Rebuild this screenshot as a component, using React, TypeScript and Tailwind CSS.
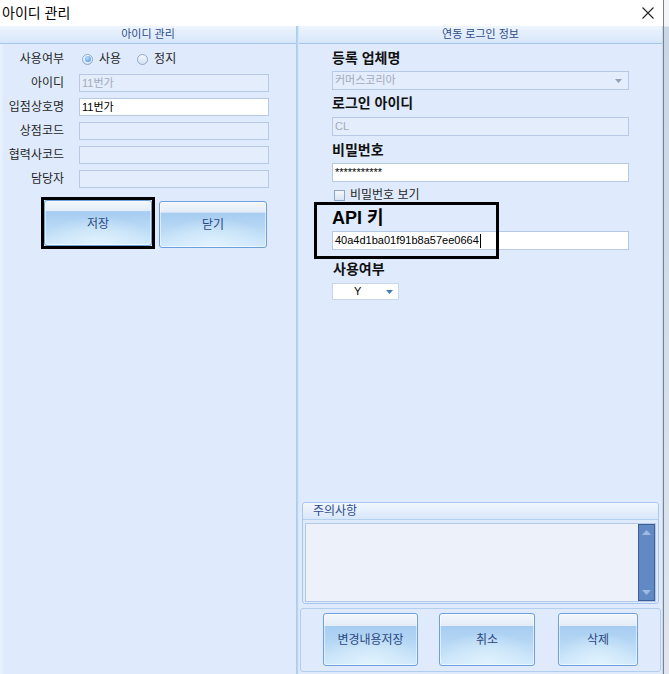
import React from 'react';

const glass =
  "rounded-[3px] border border-[#6d9fdc] bg-[radial-gradient(ellipse_55%_65%_at_50%_100%,#e0f2fd_0%,rgba(224,242,253,0)_100%),linear-gradient(to_bottom,#f3f7fb_0%,#e3ecf7_23%,#a5ccf1_24%,#b9d9f5_60%,#cfe8fb_100%)] shadow-[inset_0_0_0_1px_rgba(255,255,255,0.55)] text-[12px] text-[#2b4883] flex items-center justify-center";

const headerBar =
  "h-[18px] shrink-0 border-b border-[#a7c5eb] bg-[linear-gradient(to_bottom,#eef5fe,#d6e6fa)] flex items-center justify-center text-[11px] text-[#2d4a88]";

function FieldRow({ label, children }: { label: string; children: React.ReactNode }) {
  return (
    <div className="flex h-[18px] items-center">
      <div className="w-[64px] text-right text-[12px] text-[#1f1f1f] whitespace-nowrap">{label}</div>
      <div className="ml-[15px] flex items-center">{children}</div>
    </div>
  );
}

function Radio({ checked }: { checked?: boolean }) {
  return (
    <span className="flex h-[11px] w-[11px] items-center justify-center rounded-full border border-[#8ea8cc] bg-[linear-gradient(to_bottom,#f4f8fd,#d5e2f2)]">
      {checked && <span className="h-[6px] w-[6px] rounded-full bg-[radial-gradient(circle_at_40%_35%,#b9dcfb,#3d8be0)]" />}
    </span>
  );
}

function Arrow({ color }: { color: string }) {
  return (
    <svg width="7" height="4" viewBox="0 0 7 4">
      <path d="M0 0 H7 L3.5 4 Z" fill={color} />
    </svg>
  );
}

function Label({ text, className }: { text: string; className: string }) {
  return <div className={`h-[20px] text-[14px] font-bold leading-[20px] text-[#111] ${className}`}>{text}</div>;
}

export default function App() {
  return (
    <div className="flex h-[674px] w-[669px] overflow-hidden bg-[#e6ebf2] font-['Liberation_Sans','Noto_Sans_CJK_KR',sans-serif]">
      <div className="flex w-[663px] flex-col">
        {/* title bar */}
        <div className="flex h-[26px] shrink-0 items-center justify-between bg-white pl-[2px] pr-[9px]">
          <span className="text-[14px] text-black">아이디 관리</span>
          <svg width="12" height="12" viewBox="0 0 12 12" className="mb-[1px]">
            <path d="M0.5 0.5 L11.5 11.5 M11.5 0.5 L0.5 11.5" stroke="#222" strokeWidth="1.1" />
          </svg>
        </div>

        <div className="flex flex-1 bg-[#dfebfc]">
          {/* left panel */}
          <div className="flex w-[296px] flex-col bg-[linear-gradient(to_right,#eaf2fe,#dfebfc_4px)]">
            <div className={headerBar}>아이디 관리</div>
            <div className="flex flex-col gap-[6px] pt-[6px]">
              <FieldRow label="사용여부">
                <div className="ml-[3px] flex items-center text-[12px] text-[#1f1f1f]">
                  <Radio checked />
                  <span className="ml-[6px]">사용</span>
                  <span className="ml-[16px]"><Radio /></span>
                  <span className="ml-[6px]">정지</span>
                </div>
              </FieldRow>
              <FieldRow label="아이디">
                <div className="flex h-[18px] w-[190px] items-center border border-[#b6cae6] bg-[#e3edfb] pl-[2px] text-[11px] text-[#a3abbb]">11번가</div>
              </FieldRow>
              <FieldRow label="입점상호명">
                <div className="flex h-[18px] w-[190px] items-center border border-[#b6cae6] bg-white pl-[2px] text-[11px] text-black">11번가</div>
              </FieldRow>
              <FieldRow label="상점코드">
                <div className="h-[18px] w-[190px] border border-[#b6cae6] bg-[#e3edfb]" />
              </FieldRow>
              <FieldRow label="협력사코드">
                <div className="h-[18px] w-[190px] border border-[#b6cae6] bg-[#e3edfb]" />
              </FieldRow>
              <FieldRow label="담당자">
                <div className="h-[18px] w-[190px] border border-[#b6cae6] bg-[#e3edfb]" />
              </FieldRow>
            </div>
            <div className="ml-[41px] mt-[9px] flex items-start">
              <div className="border-[3px] border-black">
                <button className={`h-[46px] w-[108px] pt-[2px] ${glass}`}>저장</button>
              </div>
              <button className={`ml-[4px] mt-[4px] h-[47px] w-[108px] ${glass}`}>닫기</button>
            </div>
          </div>

          {/* divider */}
          <div className="w-[3px] bg-[linear-gradient(to_right,#a9c7ee,#b9d3f2,#e6effc)]" />

          {/* right panel */}
          <div className="relative flex flex-1 flex-col border-r border-[#c4d8f2] pb-[2px]">
            <div className={headerBar}>연동 로그인 정보</div>
            <div className="flex flex-col pl-[33px]">
              <Label text="등록 업체명" className="mt-[4px]" />
              <div className="mt-[3px] flex h-[19px] w-[297px] items-center justify-between border border-[#b6cae6] bg-[#e3edfb] pl-[2px] pr-[6px] text-[11px] text-[#a3abbb]">
                <span>커머스코리아</span>
                <Arrow color="#8fa1b8" />
              </div>
              <Label text="로그인 아이디" className="mt-[3px]" />
              <div className="mt-[4px] flex h-[19px] w-[297px] items-center border border-[#b6cae6] bg-[#e3edfb] pl-[2px] text-[11px] text-[#a3abbb]">CL</div>
              <Label text="비밀번호" className="mt-[4px]" />
              <div className="mt-[3px] flex h-[19px] w-[297px] items-center border border-[#b6cae6] bg-white pl-[2px] text-[11px] text-black">***********</div>
              <div className="mt-[7px] flex h-[12px] items-center pl-[2px] text-[12px] text-[#1f1f1f]">
                <span className="h-[11px] w-[11px] border border-[#8ca6c8] bg-[linear-gradient(to_bottom,#f5f8fc,#d9e4f2)]" />
                <span className="ml-[5px]">비밀번호 보기</span>
              </div>
              <div className="mt-[7px] h-[20px] text-[18px] font-bold leading-[20px] text-black">API 키</div>
              <div className="mt-[3px] flex h-[19px] w-[297px] items-center border border-[#b6cae6] bg-white pl-[2px] text-[11px] text-black">
                <span>40a4d1ba01f91b8a57ee0664</span>
                <span className="ml-[1px] h-[14px] w-px bg-black" />
              </div>
              <Label text="사용여부" className="mt-[9px] pl-[1px]" />
              <div className="mt-[4px] flex h-[17px] w-[67px] items-center border border-[#c7d6ea] bg-white text-[11px] text-black">
                <span className="ml-[21px]">Y</span>
                <span className="ml-auto mr-[5px]"><Arrow color="#4a78c0" /></span>
              </div>
            </div>

            {/* highlight frame around API key */}
            <div className="absolute left-[15px] top-[176px] h-[57px] w-[185px] border-[3px] border-black" />

            {/* notes */}
            <div className="mx-[3px] mt-auto flex h-[102px] flex-col rounded-[3px] border border-[#a9c7ec]">
              <div className="flex h-[17px] items-center rounded-t-[3px] border-b border-[#b5cfef] bg-[linear-gradient(to_bottom,#f1f7fe,#d8e7fa)] pl-[10px] text-[12px] text-[#2d4a88]">주의사항</div>
              <div className="mx-[2px] mt-[3px] flex h-[79px] border border-[#b4c9e6] bg-[#ecf1fa]">
                <div className="flex-1" />
                <div className="flex w-[17px] flex-col items-center justify-between border border-[#3d5f95] bg-[#6189c4] py-[5px]">
                  <svg width="9" height="5" viewBox="0 0 9 5"><path d="M0 5 L4.5 0 L9 5 Z" fill="#9dbbe3" /></svg>
                  <svg width="9" height="5" viewBox="0 0 9 5"><path d="M0 0 L9 0 L4.5 5 Z" fill="#9dbbe3" /></svg>
                </div>
              </div>
            </div>

            {/* action buttons */}
            <div className="ml-[1px] mr-[1px] mt-[4px] flex h-[64px] items-start rounded-[3px] border border-[#b3cdee] pl-[22px] pt-[4px]">
              <button className={`h-[53px] w-[95px] ${glass}`}>변경내용저장</button>
              <button className={`ml-[21px] h-[53px] w-[96px] ${glass}`}>취소</button>
              <button className={`ml-[23px] h-[53px] w-[80px] ${glass}`}>삭제</button>
            </div>
          </div>
        </div>
      </div>
      <div className="w-[6px] border-l border-[#7d8288] bg-[linear-gradient(to_bottom,#f3f5f8_0px,#f3f5f8_26px,#c9d6e6_27px,#dfe6ef_100%)]" />
    </div>
  );
}
